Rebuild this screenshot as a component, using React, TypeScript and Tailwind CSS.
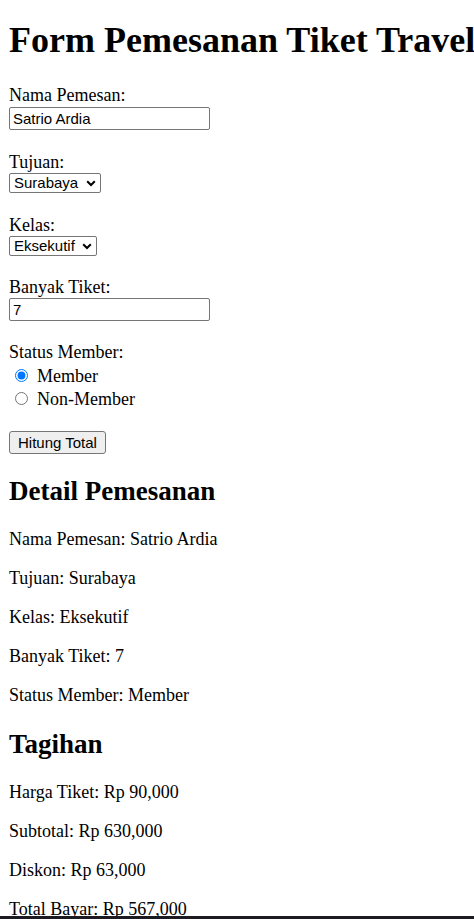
import { useState } from 'react'

function Chevron() {
  return (
    <svg
      className="pointer-events-none absolute right-[5px] top-[7px]"
      width="10"
      height="7"
      viewBox="0 0 10 7"
      fill="none"
    >
      <path d="M1.2 1.3 L5 5 L8.8 1.3" stroke="#000" strokeWidth="2" />
    </svg>
  )
}

export default function App() {
  const [nama, setNama] = useState('Satrio Ardia')
  const [tujuan, setTujuan] = useState('Surabaya')
  const [kelas, setKelas] = useState('Eksekutif')
  const [tiket, setTiket] = useState('7')
  const [member, setMember] = useState('Member')

  const harga = 90000
  const subtotal = harga * Number(tiket || 0)
  const diskon = member === 'Member' ? subtotal * 0.1 : 0
  const total = subtotal - diskon
  const rp = (n: number) => 'Rp ' + n.toLocaleString('en-US')

  const inputCls =
    "block h-[23px] w-[201px] border border-[#767676] rounded-[2px] bg-white px-[3px] font-['Liberation_Sans',Arial,sans-serif] text-[15px] text-black outline-none"
  const selectCls =
    "block h-[20px] appearance-none border border-[#767676] rounded-[2px] bg-white pl-[4px] font-['Liberation_Sans',Arial,sans-serif] text-[15px] leading-[18px] text-black outline-none"

  return (
    <div className="min-h-screen bg-white px-[9px] font-['Liberation_Serif','Times_New_Roman',serif] text-[18px] text-black">
      <h1 className="mt-[20px] mb-[24px] whitespace-nowrap text-[36px] font-bold leading-[41.4px]">
        Form Pemesanan Tiket Travel
      </h1>

      <form onSubmit={(e) => e.preventDefault()}>
        <div className="leading-[20.7px]">Nama Pemesan:</div>
        <input
          type="text"
          value={nama}
          onChange={(e) => setNama(e.target.value)}
          className={inputCls + ' mt-[1px]'}
        />

        <div className="mt-[21.4px] leading-[20.7px]">Tujuan:</div>
        <div className="relative mt-[1px] w-[92px]">
          <select value={tujuan} onChange={(e) => setTujuan(e.target.value)} className={selectCls + ' w-[92px]'}>
            <option>Surabaya</option>
            <option>Jakarta</option>
            <option>Bandung</option>
          </select>
          <Chevron />
        </div>

        <div className="mt-[21.8px] leading-[20.7px]">Kelas:</div>
        <div className="relative mt-[0px] w-[88px]">
          <select value={kelas} onChange={(e) => setKelas(e.target.value)} className={selectCls + ' w-[88px]'}>
            <option>Eksekutif</option>
            <option>Bisnis</option>
            <option>Ekonomi</option>
          </select>
          <Chevron />
        </div>

        <div className="mt-[21.5px] leading-[20.7px]">Banyak Tiket:</div>
        <input
          type="text"
          value={tiket}
          onChange={(e) => setTiket(e.target.value)}
          className={inputCls + ' mt-[0px]'}
        />

        <div className="mt-[21.5px] leading-[20.7px]">Status Member:</div>
        <div className="mt-[3.3px]">
          {['Member', 'Non-Member'].map((opt) => (
            <label key={opt} className="flex h-[23px] items-start leading-[20.7px]">
              <input
                type="radio"
                name="member"
                checked={member === opt}
                onChange={() => setMember(opt)}
                className="m-0 mt-[2.5px] ml-[6px] mr-[9px] h-[13px] w-[13px]"
              />
              {opt}
            </label>
          ))}
        </div>

        <button
          type="submit"
          className="mt-[19px] block h-[23px] rounded-[3px] border border-[#767676] bg-[#efefef] px-[8px] font-['Liberation_Sans',Arial,sans-serif] text-[15px] leading-[19px] text-black"
        >
          Hitung Total
        </button>
      </form>

      <h2 className="mt-[21.6px] mb-[22.4px] text-[27px] font-bold leading-[31px]">Detail Pemesanan</h2>
      <p className="my-[18px] leading-[21px]">Nama Pemesan: {nama}</p>
      <p className="my-[18px] leading-[21px]">Tujuan: {tujuan}</p>
      <p className="my-[18px] leading-[21px]">Kelas: {kelas}</p>
      <p className="my-[18px] leading-[21px]">Banyak Tiket: {tiket}</p>
      <p className="my-[18px] leading-[21px]">Status Member: {member}</p>

      <h2 className="my-[22.4px] text-[27px] font-bold leading-[31px]">Tagihan</h2>
      <p className="my-[18px] leading-[21px]">Harga Tiket: {rp(harga)}</p>
      <p className="my-[18px] leading-[21px]">Subtotal: {rp(subtotal)}</p>
      <p className="my-[18px] leading-[21px]">Diskon: {rp(diskon)}</p>
      <p className="my-[18px] leading-[21px]">Total Bayar: {rp(total)}</p>

      <div className="fixed bottom-0 left-0 h-[3px] w-full bg-[#1d1b22]" />
    </div>
  )
}
